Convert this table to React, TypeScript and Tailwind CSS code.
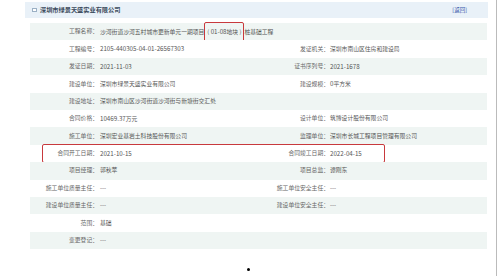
import React from "react";

type Row = {
  l1: string;
  v1: React.ReactNode;
  l2?: string;
  v2?: React.ReactNode;
  boxed?: boolean;
};

// numbers look a touch wider than the cjk text in the original
const num = (s: string) => <span className="text-[6.2px]">{s}</span>;

const rows: Row[] = [
  {
    l1: "工程名称：",
    v1: (
      <span className="whitespace-nowrap">
        沙河街道沙河五村城市更新单元一期项目
        <span className="relative inline-block px-[3px]">
          ( {num("01-08")}地块 )
          <span className="absolute left-0 right-0 top-[-5px] bottom-[-5px] border-[1.5px] border-[#c8393d] rounded-[2px]" />
        </span>
        桩基础工程
      </span>
    ),
  },
  { l1: "工程编号：", v1: num("2105-440305-04-01-26567303"), l2: "发证机关：", v2: "深圳市南山区住房和建设局" },
  { l1: "发证日期：", v1: num("2021-11-03"), l2: "证书序列号：", v2: num("2021-1678") },
  { l1: "建设单位：", v1: "深圳市绿景天盛实业有限公司", l2: "建设规模：", v2: <>{num("0")}平方米</> },
  { l1: "建设地址：", v1: "深圳市南山区沙河街道沙河街与新塘街交汇处" },
  { l1: "合同价格：", v1: <>{num("10469.37")}万元</>, l2: "设计单位：", v2: "筑博设计股份有限公司" },
  { l1: "施工单位：", v1: "深圳宏业基岩土科技股份有限公司", l2: "监理单位：", v2: "深圳市长城工程项目管理有限公司" },
  { l1: "合同开工日期：", v1: num("2021-10-15"), l2: "合同竣工日期：", v2: num("2022-04-15"), boxed: true },
  { l1: "项目经理：", v1: "郭秋苹", l2: "项目总监：", v2: "谭刚东" },
  { l1: "施工单位质量主任：", v1: "---", l2: "施工单位安全主任：", v2: "---" },
  { l1: "建设单位质量主任：", v1: "---", l2: "建设单位安全主任：", v2: "---" },
  { l1: "范围：", v1: "基础" },
  { l1: "变更登记：", v1: "---" },
];

export default function App() {
  return (
    <div
      className="relative w-[498px] h-[276px] bg-white overflow-hidden text-[#555] text-[5.8px]"
      style={{ fontFamily: '"Noto Sans CJK SC", "Liberation Sans", sans-serif' }}
    >
      {/* HEADER */}
      <div className="ml-[25px] mt-[2px] w-[463px] h-[16px] bg-[#e9f1f8] flex items-center">
        <span className="ml-[7px] w-[5px] h-[4px] border border-[#9bb0c4] bg-white" />
        <span className="ml-[3px] font-bold text-[6.2px] text-[#3a4a5c]">深圳市绿景天盛实业有限公司</span>
        <span className="ml-auto mr-[21px] text-[#3355aa] text-[5.5px]">[返回]</span>
      </div>

      {/* TABLE */}
      <div className="ml-[30px] mt-[5px] w-[457px] flex flex-col">
        {rows.map((r, i) => (
          <div
            key={i}
            className={`relative flex items-center h-[17.4px] ${i % 2 === 0 ? "bg-[#eff5f3]" : "bg-white"}`}
          >
            <div className="w-[68px] text-right whitespace-nowrap text-[#666]">{r.l1}</div>
            <div className="pl-[2px] w-[172px] whitespace-nowrap">{r.v1}</div>
            {r.l2 && (
              <>
                <div className="w-[59px] text-right whitespace-nowrap text-[#666]">{r.l2}</div>
                <div className="pl-[1px] whitespace-nowrap">{r.v2}</div>
              </>
            )}
            {r.boxed && (
              <span className="absolute left-[12px] w-[343px] top-[-1px] bottom-[-1px] border-[1.5px] border-[#c8393d] rounded-[2px]" />
            )}
          </div>
        ))}
      </div>

      {/* dot */}
      <span className="absolute left-[247px] top-[268px] w-[3px] h-[3px] rounded-full bg-black" />
      {/* scrollbar line */}
      <span className="absolute right-[1px] top-0 w-[1px] h-[276px] bg-[#bbb]" />
    </div>
  );
}
